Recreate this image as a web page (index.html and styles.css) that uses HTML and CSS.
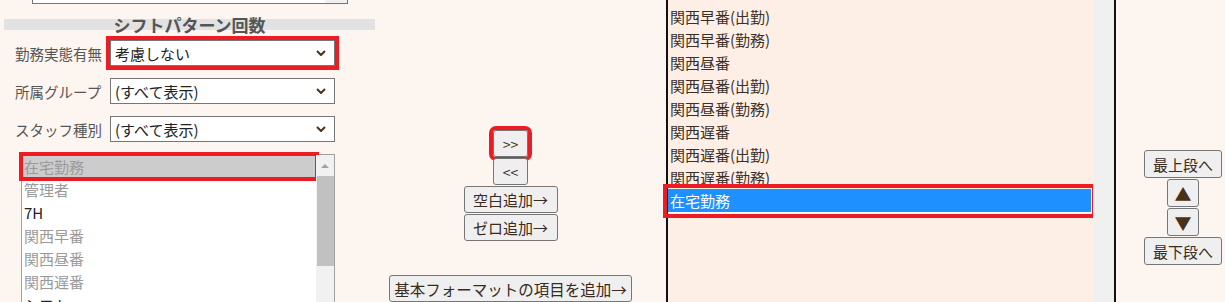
FILE: index.html
```html
<!DOCTYPE html>
<html lang="ja">
<head>
    <meta charset="UTF-8">
    <title>シフトパターン回数</title>
    <link rel="stylesheet" href="styles.css">
</head>
<body>
    <div class="page">
        <section class="left">
            <div class="topbox"></div>
            <div class="section-title">シフトパターン回数</div>

            <div class="field first">
                <span class="field-label">勤務実態有無</span>
                <div class="select marked">
                    <span>考慮しない</span>
                    <svg class="chev" viewBox="0 0 10 6"><path d="M1 1l4 4 4-4"/></svg>
                </div>
            </div>
            <div class="field">
                <span class="field-label">所属グループ</span>
                <div class="select">
                    <span>(すべて表示)</span>
                    <svg class="chev" viewBox="0 0 10 6"><path d="M1 1l4 4 4-4"/></svg>
                </div>
            </div>
            <div class="field">
                <span class="field-label">スタッフ種別</span>
                <div class="select">
                    <span>(すべて表示)</span>
                    <svg class="chev" viewBox="0 0 10 6"><path d="M1 1l4 4 4-4"/></svg>
                </div>
            </div>

            <div class="listbox">
                <div class="options">
                    <div class="opt used picked marked">在宅勤務</div>
                    <div class="opt used">管理者</div>
                    <div class="opt">7H</div>
                    <div class="opt used">関西早番</div>
                    <div class="opt used">関西昼番</div>
                    <div class="opt used">関西遅番</div>
                    <div class="opt">シフト</div>
                </div>
                <div class="scrollbar">
                    <div class="scroll-up"></div>
                    <div class="thumb"></div>
                </div>
            </div>
        </section>

        <section class="middle">
            <button class="btn btn-arrow marked">&gt;&gt;</button>
            <button class="btn btn-arrow">&lt;&lt;</button>
            <button class="btn btn-add">空白追加→</button>
            <button class="btn btn-add">ゼロ追加→</button>
            <button class="btn btn-wide">基本フォーマットの項目を追加→</button>
        </section>

        <section class="picked-list">
            <div class="items">
                <div class="item">関西早番(出勤)</div>
                <div class="item">関西早番(勤務)</div>
                <div class="item">関西昼番</div>
                <div class="item">関西昼番(出勤)</div>
                <div class="item">関西昼番(勤務)</div>
                <div class="item">関西遅番</div>
                <div class="item">関西遅番(出勤)</div>
                <div class="item">関西遅番(勤務)</div>
                <div class="item active marked">在宅勤務</div>
            </div>
            <div class="track"></div>
        </section>

        <section class="order">
            <button class="btn btn-order">最上段へ</button>
            <button class="btn btn-step">▲</button>
            <button class="btn btn-step">▼</button>
            <button class="btn btn-order">最下段へ</button>
        </section>
    </div>
</body>
</html>
```

FILE: styles.css
```css
body {
    margin: 0;
    background-color: #FDF5F0;
    font-family: 'Noto Sans CJK JP', 'Liberation Sans', sans-serif;
    font-size: 15px;
    color: #333;
    overflow: hidden;
}

.page {
    display: flex;
    height: 302px;
    overflow: hidden;
}

/* left panel */
.left {
    flex: none;
    width: 371px;
    margin-left: 4px;
}

.topbox {
    margin-left: 28px;
    width: 314px;
    height: 3px;
    border: 1px solid #767676;
    border-top: none;
    background: linear-gradient(to right, #fff 292px, #f0f0f0 292px);
}

.section-title {
    margin-top: 15px;
    height: 11px;
    line-height: 11px;
    background-color: #E2E2E2;
    text-align: center;
    font-size: 17px;
    font-weight: bold;
    color: #555;
}

.field {
    display: flex;
    align-items: center;
    height: 26px;
    padding-left: 11px;
    margin-top: 12px;
}
.field.first {
    margin-top: 10px;
}

.field-label {
    width: 95px;
    font-size: 14.5px;
    color: #555;
    white-space: nowrap;
}

.select {
    box-sizing: border-box;
    width: 225px;
    height: 26px;
    border: 1px solid #767676;
    background-color: #fff;
    display: flex;
    align-items: center;
    justify-content: space-between;
    padding: 0 8px 0 4px;
    color: #222;
}

.chev {
    width: 10px;
    height: 6px;
    fill: none;
    stroke: #4A3218;
    stroke-width: 2;
}

.marked {
    outline: 4px solid #EC1C24;
}

.listbox {
    display: flex;
    margin-top: 12px;
    margin-left: 17px;
    width: 314px;
    height: 200px;
    box-sizing: border-box;
    border: 1px solid #A0A0A0;
    background-color: #fff;
}

.options {
    flex: 1;
}

.opt {
    height: 23px;
    line-height: 23px;
    padding-left: 2px;
    color: #222;
}
.opt.used {
    color: #9A9A9A;
}
.opt.picked {
    background-color: #CCCCCC;
}
.opt.marked {
    outline-offset: -1px;
}

.scrollbar {
    width: 18px;
    background-color: #F1F1F1;
    display: flex;
    flex-direction: column;
    align-items: center;
}

.scroll-up {
    width: 0;
    height: 0;
    margin-top: 9px;
    border-left: 4px solid transparent;
    border-right: 4px solid transparent;
    border-bottom: 4px solid #A3A3A3;
}

.thumb {
    width: 17px;
    height: 90px;
    margin-top: 8px;
    background-color: #C1C1C1;
}

/* middle buttons */
.middle {
    flex: none;
    width: 271px;
    padding-top: 130px;
    display: flex;
    flex-direction: column;
    align-items: center;
}

.btn {
    box-sizing: border-box;
    height: 28px;
    padding: 0;
    margin: 1px 0 0;
    border: 1px solid #767676;
    border-radius: 3px;
    background-color: #EFEFEF;
    font-family: 'Noto Sans CJK JP', 'Liberation Sans', sans-serif;
    font-size: 15px;
    color: #3A2A1A;
}

.btn-arrow {
    width: 35px;
    font-size: 14px;
}
.middle .btn:first-child {
    margin-top: 0;
}
.btn-add {
    width: 94px;
}
.btn-wide {
    width: 243px;
    margin-top: 34px;
    font-size: 15.5px;
}

/* picked list */
.picked-list {
    flex: none;
    display: flex;
    box-sizing: border-box;
    width: 450px;
    height: 400px;
    margin-left: 20px;
    margin-top: -43px;
    border: 2px solid #111;
    background-color: #FEEFE6;
}

.items {
    flex: 1;
    padding-top: 46px;
    padding-right: 2px;
}

.item {
    height: 23px;
    line-height: 23px;
    padding-left: 2px;
    color: #3A3026;
    white-space: nowrap;
}
.item.active {
    background-color: #1E90FF;
    color: #fff;
    border-bottom: 1px solid #fff;
    outline-offset: 1px;
}

.track {
    width: 21px;
    background-color: #F0F0F0;
}

/* order buttons */
.order {
    flex: none;
    width: 78px;
    margin-left: 28px;
    padding-top: 150px;
    display: flex;
    flex-direction: column;
    align-items: center;
}
.order .btn:first-child {
    margin-top: 0;
}
.btn-order {
    width: 78px;
}
.btn-step {
    width: 32px;
    font-size: 17px;
    line-height: 1;
    color: #4A3218;
}
```
